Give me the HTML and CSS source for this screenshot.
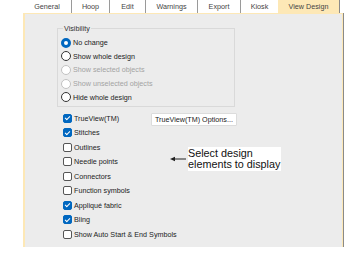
FILE: index.html
```html
<!DOCTYPE html>
<html lang="en">
<head>
    <meta charset="UTF-8">
    <title>View Design</title>
    <link rel="stylesheet" href="styles.css">
</head>
<body>
    <div class="dialog">
        <div class="tabs">
            <div class="tab t-general">General</div>
            <div class="tab t-hoop">Hoop</div>
            <div class="tab t-edit">Edit</div>
            <div class="tab t-warn">Warnings</div>
            <div class="tab t-export">Export</div>
            <div class="tab t-kiosk">Kiosk</div>
            <div class="tab t-view active">View Design</div>
        </div>
        <div class="panel">
            <fieldset class="group">
                <legend>Visibility</legend>
                <div class="item"><span class="radio on"></span>No change</div>
                <div class="item"><span class="radio"></span>Show whole design</div>
                <div class="item disabled"><span class="radio"></span>Show selected objects</div>
                <div class="item disabled"><span class="radio"></span>Show unselected objects</div>
                <div class="item"><span class="radio"></span>Hide whole design</div>
            </fieldset>
            <div class="options">
                <div class="checks">
                    <div class="check"><span class="box on"></span>TrueView(TM)</div>
                    <div class="check"><span class="box on"></span>Stitches</div>
                    <div class="check"><span class="box"></span>Outlines</div>
                    <div class="check"><span class="box"></span>Needle points</div>
                    <div class="check"><span class="box"></span>Connectors</div>
                    <div class="check"><span class="box"></span>Function symbols</div>
                    <div class="check"><span class="box on"></span>Appliqué fabric</div>
                    <div class="check"><span class="box on"></span>Bling</div>
                    <div class="check"><span class="box"></span>Show Auto Start &amp; End Symbols</div>
                </div>
                <div class="side">
                    <button class="opt-btn">TrueView(TM) Options...</button>
                    <div class="callout">
                        <svg class="arrow" width="16" height="6" viewBox="0 0 16 6">
                            <path d="M0 3 L5 0.8 L5 5.2 Z" fill="#222"/>
                            <line x1="4" y1="3" x2="16" y2="3" stroke="#222" stroke-width="1"/>
                        </svg>
                        <div class="note">Select design<br>elements to display</div>
                    </div>
                </div>
            </div>
        </div>
    </div>
</body>
</html>
```

FILE: styles.css
```css
body {
    margin: 0;
    background: #fff;
    font-family: "Liberation Sans", Arial, sans-serif;
    font-size: 7.2px;
    color: #222;
}
.dialog {
    margin-left: 23px;
    width: 320px;
}
.tabs {
    display: flex;
    height: 13px;
}
.tab {
    box-sizing: border-box;
    height: 13px;
    padding-top: 2px;
    text-align: center;
    color: #444;
    border-right: 1px solid #9a9a9a;
}
.t-general { width: 49px; }
.t-hoop { width: 38px; }
.t-edit { width: 36px; }
.t-warn { width: 52px; }
.t-export { width: 43px; }
.t-kiosk { width: 37px; }
.t-view { width: 62px; }
.tab.active {
    background: #fde8b6;
    border-right: 1px solid #8a8a8a;
}
.tab:nth-child(6) {
    border-right: none;
}
.panel {
    box-sizing: border-box;
    height: 234px;
    background: #ececec;
    border-top: 1px solid #fde8b6;
    border-left: 2px solid #fde8b6;
    border-right: 1px solid #fde8b6;
    box-shadow: 1px 0 0 #8a8a8a;
    padding: 10px 0 0 32px;
}
.group {
    width: 178px;
    box-sizing: border-box;
    height: 83px;
    margin: 0;
    border: 1px solid #d9d9d9;
    padding: 3px 0 0 3px;
}
.group legend {
    padding: 0 1px;
    margin-left: 2px;
    color: #333;
}
.item, .check {
    display: flex;
    align-items: center;
    height: 13.6px;
    white-space: nowrap;
}
.item.disabled {
    color: #a3a3a3;
}
.radio {
    flex-shrink: 0;
    box-sizing: border-box;
    width: 10px;
    height: 10px;
    border: 1px solid #333;
    border-radius: 50%;
    margin-right: 2px;
    background: #fff;
}
.item.disabled .radio {
    border-color: #c2c2c2;
}
.radio.on {
    border: 3px solid #0067c0;
}
.options {
    display: flex;
    margin-top: 4px;
    margin-left: 6px;
}
.checks {
    width: 88px;
    flex-shrink: 0;
}
.check {
    height: 14.5px;
}
.box {
    flex-shrink: 0;
    box-sizing: border-box;
    width: 9px;
    height: 9px;
    border: 1px solid #555;
    border-radius: 2px;
    margin-right: 2px;
    background: #fff;
    position: relative;
}
.box.on {
    background: #0067c0;
    border-color: #0067c0;
}
.box.on::after {
    content: "";
    position: absolute;
    left: 2px;
    top: 0.5px;
    width: 2px;
    height: 4px;
    border: solid #fff;
    border-width: 0 1px 1px 0;
    transform: rotate(45deg);
}
.side {
    display: flex;
    flex-direction: column;
    align-items: flex-start;
}
.opt-btn {
    font-family: "Liberation Sans", Arial, sans-serif;
    font-size: 7.2px;
    color: #222;
    background: #fff;
    border: 1px solid #dcdcdc;
    border-radius: 1px;
    padding: 1px 3px;
    height: 13px;
    margin-top: 2px;
    white-space: nowrap;
}
.callout {
    display: flex;
    align-items: center;
    margin-top: 21px;
    margin-left: 19px;
}
.arrow {
    margin-right: 2px;
}
.note {
    background: #fff;
    font-size: 10.8px;
    line-height: 10.5px;
    color: #111;
    padding: 1px 1px 2px 0;
}
```
